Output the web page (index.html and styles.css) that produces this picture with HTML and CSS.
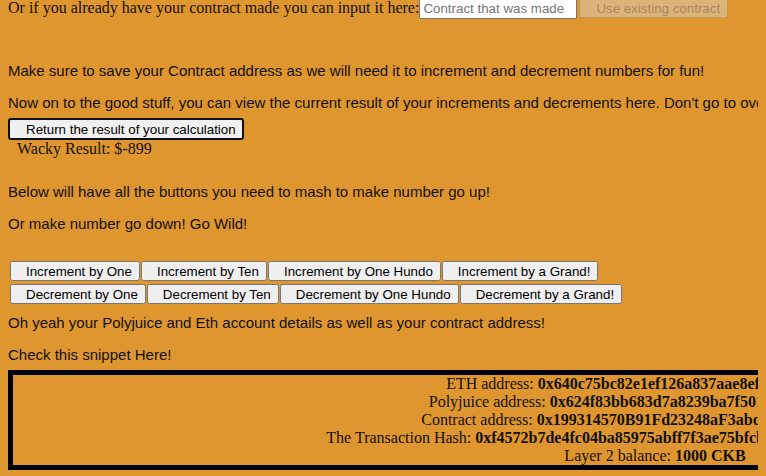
FILE: index.html
```html
<!DOCTYPE html>
<html>
<head>
<meta charset="utf-8">
<title>Wacky Counter</title>
<link rel="stylesheet" href="styles.css">
</head>
<body>
<div class="top-row">Or if you already have your contract made you can input it here:<input class="contract-input" type="text" placeholder="Contract that was made"><button class="use-btn" disabled>Use existing contract</button></div>

<p class="sans make">Make sure to save your Contract address as we will need it to increment and decrement numbers for fun!</p>
<p class="sans now">Now on to the good stuff, you can view the current result of your increments and decrements here. Don't go to overboard!</p>

<div class="result-row"><button class="btn focused">Return the result of your calculation</button></div>
<div class="wacky">Wacky Result: $-899</div>

<p class="sans below">Below will have all the buttons you need to mash to make number go up!</p>
<p class="sans ormake">Or make number go down! Go Wild!</p>

<div class="btn-row inc">
  <button class="btn">Increment by One</button>
  <button class="btn">Increment by Ten</button>
  <button class="btn">Increment by One Hundo</button>
  <button class="btn">Increment by a Grand!</button>
</div>
<div class="btn-row dec">
  <button class="btn">Decrement by One</button>
  <button class="btn">Decrement by Ten</button>
  <button class="btn">Decrement by One Hundo</button>
  <button class="btn">Decrement by a Grand!</button>
</div>

<p class="sans ohyeah">Oh yeah your Polyjuice and Eth account details as well as your contract address!</p>
<p class="sans check">Check this snippet Here!</p>

<div class="snippet">
  <div>ETH address: <b>0x640c75bc82e1ef126a837aae8ef5d1a0c3b7e924</b></div>
  <div>Polyjuice address: <b>0x624f83bb683d7a8239ba7f501e3c9a4d27b86f05</b></div>
  <div>Contract address: <b>0x199314570B91Fd23248aF3abdE6c02A5f1D43b87</b></div>
  <div>The Transaction Hash: <b>0xf4572b7de4fc04ba85975abff7f3ae75bfcbf3a92e1d84c06b7a5e2f19d3c8b4</b></div>
  <div>Layer 2 balance: <b>1000 CKB</b></div>
</div>
</body>
</html>
```

FILE: styles.css
```css
html {
  overflow: hidden;
  background: #e0962f;
}

body {
  margin: 0 8px;
  background: #e0962f;
  color: #111;
  font-family: "Liberation Serif", "Times New Roman", serif;
  font-size: 16px;
}

.top-row {
  margin-top: -2px;
  white-space: nowrap;
}

.contract-input {
  font-family: "Liberation Sans", Arial, sans-serif;
  font-size: 13.333px;
  margin: 0;
  box-sizing: border-box;
  width: 158px;
  height: 21px;
}

.use-btn {
  font-family: "Liberation Sans", Arial, sans-serif;
  font-size: 13.333px;
  margin: 0 0 0 2px;
  padding: 1px 6px 1px 15px;
  height: 20px;
}

.sans {
  font-family: "Liberation Sans", Arial, sans-serif;
  font-size: 15px;
  line-height: 18px;
  margin: 0;
  white-space: nowrap;
}

.make { margin-top: 43px; }
.now { margin-top: 14px; }

.result-row {
  margin-top: 6px;
  line-height: 0;
}

.btn {
  font-family: "Liberation Sans", Arial, sans-serif;
  font-size: 13.333px;
  line-height: 15px;
  margin: 0;
  padding: 1px 6px 1px 14px;
  color: #000;
}

.focused {
  box-sizing: border-box;
  height: 22px;
  border: 2px solid #101010;
  border-radius: 3px;
  background: #f0f0f0;
  padding: 1px 6px 1px 16px;
}

.wacky {
  line-height: 18px;
  padding-left: 9px;
}

.below { margin-top: 25px; }
.ormake { margin-top: 14px; }

.btn-row {
  display: flex;
  gap: 1px;
  padding-left: 2px;
}

.btn-row .btn {
  height: 20px;
}

.inc { margin-top: 28px; }
.dec { margin-top: 3px; }

.ohyeah { margin-top: 10px; }
.check { margin-top: 14px; }

.snippet {
  margin-top: 6px;
  width: 1284px;
  border: 5px solid #000;
  text-align: center;
  line-height: 18px;
  white-space: nowrap;
}
```
